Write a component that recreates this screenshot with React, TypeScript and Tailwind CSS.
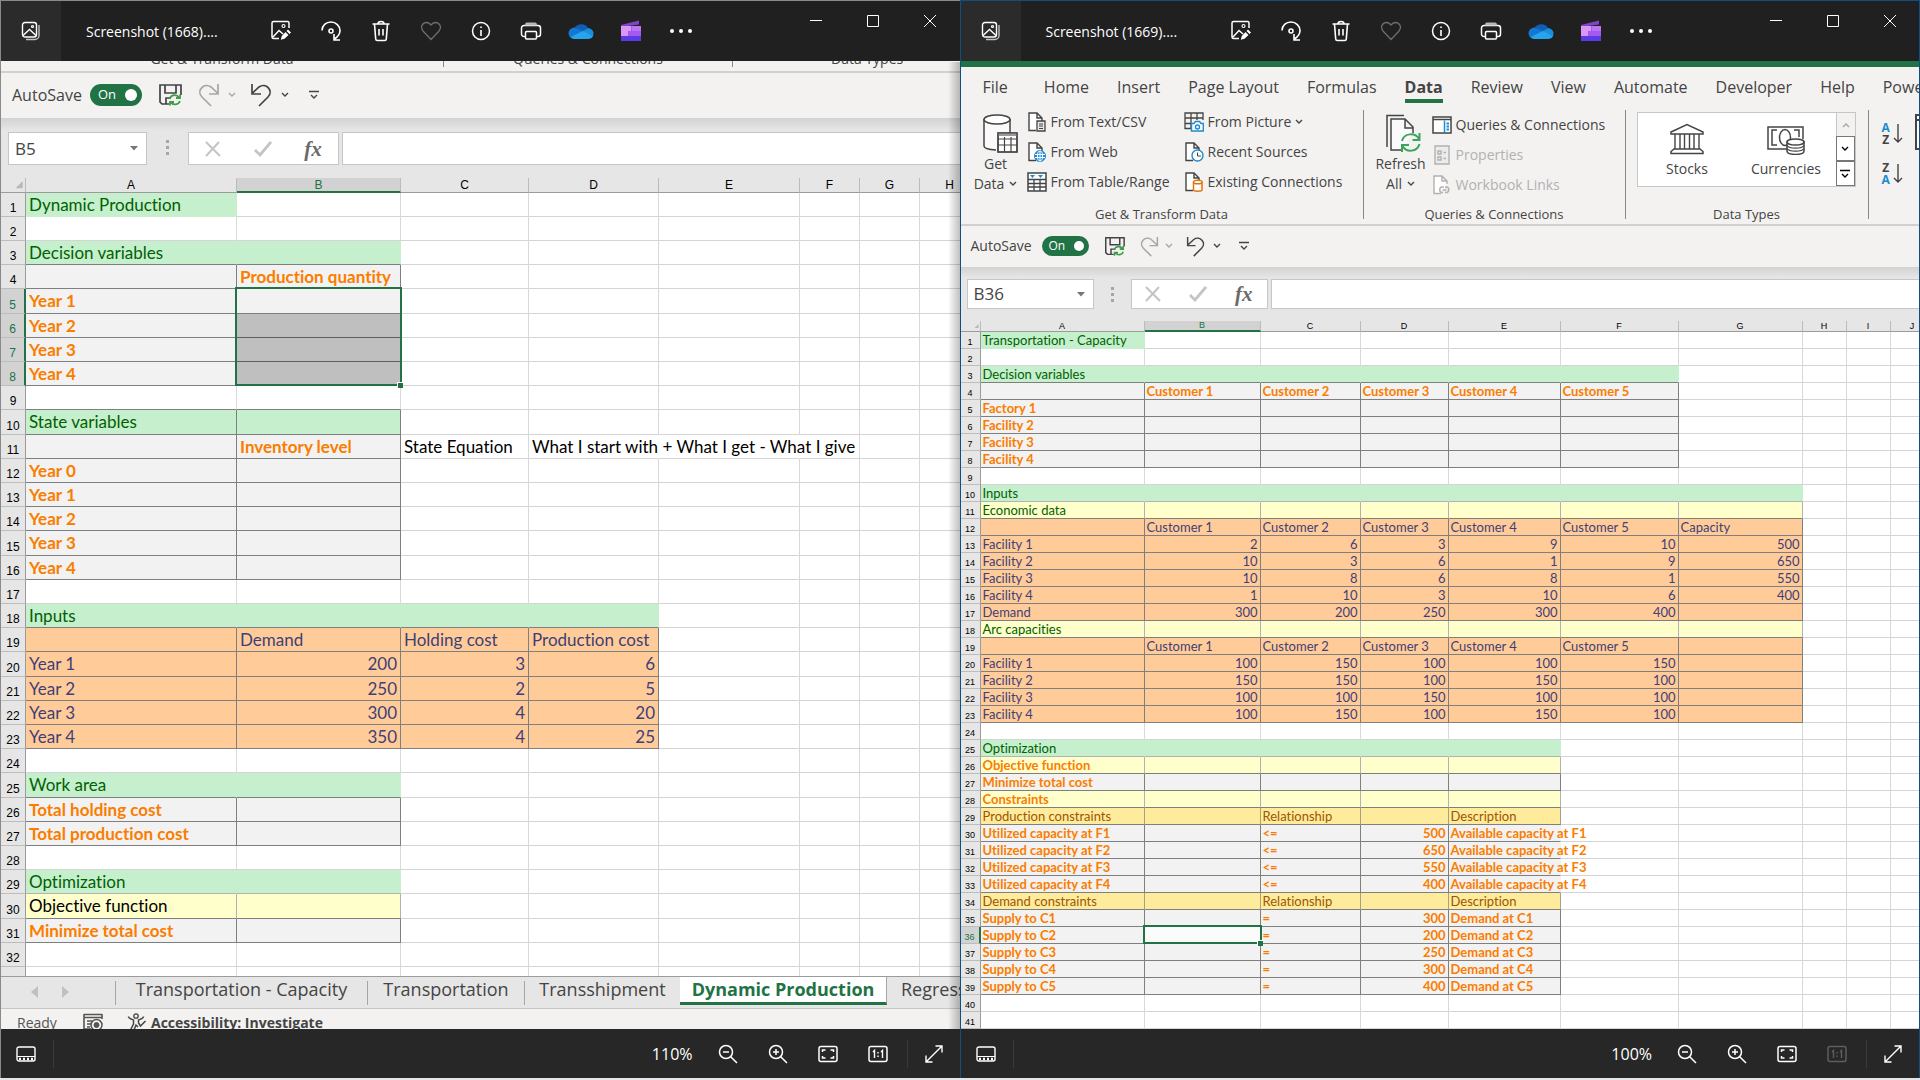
import { ReactNode } from "react";

type Cell = string | number;
type RowData = { s: string; t?: Cell[] };

// one letter per cell, borders are drawn on the right and bottom
const cellStyles: Record<string, string> = {
  ".": "bg-white text-black border-r-[#d9d9d9] border-b-[#d4d4d4]",
  _: "bg-white text-black border-r-white border-b-[#d4d4d4]",
  d: "bg-white border-r-[#d9d9d9] border-b-[#7f7f7f]",
  t: "bg-[#c6efce] text-[#006100] border-r-[#c6efce] border-b-[#c6efce]",
  g: "bg-[#c6efce] text-[#006100] border-r-[#c6efce] border-b-[#7f7f7f]",
  e: "bg-[#c6efce] text-[#006100] border-r-[#c6efce] border-b-[#b2b2b2]",
  G: "bg-[#c6efce] text-[#006100] border-r-[#7f7f7f] border-b-[#7f7f7f]",
  c: "bg-[#f2f2f2] text-[#fa7d00] font-bold border-r-[#7f7f7f] border-b-[#7f7f7f]",
  C: "bg-[#f2f2f2] text-[#fa7d00] font-bold border-r-[#f2f2f2] border-b-[#7f7f7f]",
  s: "bg-[#bfbfbf] border-r-[#7f7f7f] border-b-[#5f5f5f]",
  w: "bg-[#fbfbfb] border-r-[#7f7f7f] border-b-[#7f7f7f]",
  i: "bg-[#ffcc99] text-[#3f3f76] border-r-[#7f7f7f] border-b-[#7f7f7f]",
  y: "bg-[#ffffcc] text-[#006100] border-r-[#b2b2b2] border-b-[#7f7f7f]",
  b: "bg-[#ffffcc] text-black border-r-[#b2b2b2] border-b-[#7f7f7f]",
  o: "bg-[#ffffcc] text-[#fa7d00] font-bold border-r-[#b2b2b2] border-b-[#7f7f7f]",
  n: "bg-[#ffeb9c] text-[#9c5700] border-r-[#a6a08a] border-b-[#7f7f7f]",
};

const leftCols = [211, 164, 128, 130, 141, 60, 60, 60];
const leftRows: RowData[] = [
  { s: "t.......", t: ["Dynamic Production"] },
  { s: "........" },
  { s: "gg......", t: ["Decision variables"] },
  { s: "cc......", t: ["", "Production quantity"] },
  { s: "cc......", t: ["Year 1"] },
  { s: "cs......", t: ["Year 2"] },
  { s: "cs......", t: ["Year 3"] },
  { s: "cs......", t: ["Year 4"] },
  { s: "dd......" },
  { s: "GG......", t: ["State variables"] },
  { s: "cc.__...", t: ["", "Inventory level", "State Equation", "What I start with + What I get - What I give"] },
  { s: "cc......", t: ["Year 0"] },
  { s: "cc......", t: ["Year 1"] },
  { s: "cc......", t: ["Year 2"] },
  { s: "cc......", t: ["Year 3"] },
  { s: "cc......", t: ["Year 4"] },
  { s: "........" },
  { s: "gggg....", t: ["Inputs"] },
  { s: "iiii....", t: ["", "Demand", "Holding cost", "Production cost"] },
  { s: "iiii....", t: ["Year 1", 200, 3, 6] },
  { s: "iiii....", t: ["Year 2", 250, 2, 5] },
  { s: "iiii....", t: ["Year 3", 300, 4, 20] },
  { s: "iiii....", t: ["Year 4", 350, 4, 25] },
  { s: "........" },
  { s: "gg......", t: ["Work area"] },
  { s: "cc......", t: ["Total holding cost"] },
  { s: "cc......", t: ["Total production cost"] },
  { s: "........" },
  { s: "ee......", t: ["Optimization"] },
  { s: "bb......", t: ["Objective function"] },
  { s: "cc......", t: ["Minimize total cost"] },
  { s: "........" },
  { s: "........" },
];

const customers = ["", "Customer 1", "Customer 2", "Customer 3", "Customer 4", "Customer 5"];
const rightCols = [164, 116, 100, 88, 112, 118, 124, 44, 44, 44];
const rightRows: RowData[] = [
  { s: "t.........", t: ["Transportation - Capacity"] },
  { s: ".........." },
  { s: "gggggg....", t: ["Decision variables"] },
  { s: "cccccc....", t: customers },
  { s: "cccccc....", t: ["Factory 1"] },
  { s: "cccccc....", t: ["Facility 2"] },
  { s: "cccccc....", t: ["Facility 3"] },
  { s: "cccccc....", t: ["Facility 4"] },
  { s: ".........." },
  { s: "eeeeeee...", t: ["Inputs"] },
  { s: "yyyyyyy...", t: ["Economic data"] },
  { s: "iiiiiii...", t: [...customers, "Capacity"] },
  { s: "iiiiiii...", t: ["Facility 1", 2, 6, 3, 9, 10, 500] },
  { s: "iiiiiii...", t: ["Facility 2", 10, 3, 6, 1, 9, 650] },
  { s: "iiiiiii...", t: ["Facility 3", 10, 8, 6, 8, 1, 550] },
  { s: "iiiiiii...", t: ["Facility 4", 1, 10, 3, 10, 6, 400] },
  { s: "iiiiiii...", t: ["Demand", 300, 200, 250, 300, 400] },
  { s: "yyyyyyy...", t: ["Arc capacities"] },
  { s: "iiiiiii...", t: customers },
  { s: "iiiiiii...", t: ["Facility 1", 100, 150, 100, 100, 150] },
  { s: "iiiiiii...", t: ["Facility 2", 150, 150, 100, 150, 100] },
  { s: "iiiiiii...", t: ["Facility 3", 100, 100, 150, 100, 100] },
  { s: "iiiiiii...", t: ["Facility 4", 100, 150, 100, 150, 100] },
  { s: ".........." },
  { s: "eeeee.....", t: ["Optimization"] },
  { s: "ooooo.....", t: ["Objective function"] },
  { s: "ccccc.....", t: ["Minimize total cost"] },
  { s: "ooooo.....", t: ["Constraints"] },
  { s: "nnnnn.....", t: ["Production constraints", "", "Relationship", "", "Description"] },
  { s: "ccccC.....", t: ["Utilized capacity at F1", "", "<=", 500, "Available capacity at F1"] },
  { s: "ccccC.....", t: ["Utilized capacity at F2", "", "<=", 650, "Available capacity at F2"] },
  { s: "ccccC.....", t: ["Utilized capacity at F3", "", "<=", 550, "Available capacity at F3"] },
  { s: "ccccC.....", t: ["Utilized capacity at F4", "", "<=", 400, "Available capacity at F4"] },
  { s: "nnnnn.....", t: ["Demand constraints", "", "Relationship", "", "Description"] },
  { s: "ccccc.....", t: ["Supply to C1", "", "=", 300, "Demand at C1"] },
  { s: "cwccc.....", t: ["Supply to C2", "", "=", 200, "Demand at C2"] },
  { s: "ccccc.....", t: ["Supply to C3", "", "=", 250, "Demand at C3"] },
  { s: "ccccc.....", t: ["Supply to C4", "", "=", 300, "Demand at C4"] },
  { s: "ccccc.....", t: ["Supply to C5", "", "=", 400, "Demand at C5"] },
  { s: ".........." },
  { s: ".........." },
];

function Svg({ w, h, box, children }: { w: number; h: number; box?: string; children: ReactNode }) {
  return (
    <svg className="shrink-0" width={w} height={h} viewBox={box || `0 0 ${w} ${h}`} fill="none" stroke="currentColor" aria-hidden="true">
      {children}
    </svg>
  );
}

function Chevron() {
  return (
    <Svg w={8} h={6}><path d="M1 1l3 3 3-3" strokeWidth="1.4" /></Svg>
  );
}

/* ---------- photo viewer frame ---------- */

const toolIcons: { label: string; dim?: boolean; icon: ReactNode }[] = [
  {
    label: "Edit image",
    icon: (
      <Svg w={22} h={22}>
        <path d="M19 8V3a1.500 1.500 0 0 0-1.500-1.500h-14A1.500 1.500 0 0 0 2 3v14a1.500 1.500 0 0 0 1.500 1.500H9M3 17l6-6.500 4 3.500" strokeWidth="1.500" />
        <circle cx="13.500" cy="6" r="1.500" strokeWidth="1.200" />
        <path d="M18 9.500l3 3-1.500 1.500-3-3zM15.500 12l3 3-4 3.800-3.700 1 1-3.800z" fill="currentColor" stroke="none" />
      </Svg>
    ),
  },
  {
    label: "Rotate",
    icon: (
      <Svg w={22} h={22}>
        <path d="M2 10.500C2 5.500 6 2 11 2s9 4 9 8.500c0 3.500-2.500 6.500-5.500 8.500M14 14v6h6" strokeWidth="1.600" />
        <circle cx="11" cy="11" r="2" strokeWidth="1.600" />
      </Svg>
    ),
  },
  {
    label: "Delete",
    icon: (
      <Svg w={20} h={22}>
        <path d="M1.500 4h17M7 4c0-3.300 6-3.300 6 0M3.500 4l1.200 15c.1 1 .7 1.500 1.500 1.500h7.600c.8 0 1.400-.5 1.500-1.500L16.500 4M8 9v6.500M12 9v6.500" strokeWidth="1.600" />
      </Svg>
    ),
  },
  {
    label: "Favourite",
    dim: true,
    icon: (
      <Svg w={22} h={22}>
        <path d="M11 19.500L3 11C-.5 6.500 3 2.500 6.500 2.500 9 2.500 10 4 11 5c1-1 2-2.500 4.500-2.500C19 2.500 22.500 6.500 19 11z" strokeWidth="1.300" />
      </Svg>
    ),
  },
  {
    label: "Info",
    icon: (
      <Svg w={20} h={20}>
        <circle cx="10" cy="10" r="8.500" strokeWidth="1.500" />
        <path d="M10 9v6M10 5.500v1.500" strokeWidth="1.600" />
      </Svg>
    ),
  },
  {
    label: "Print",
    icon: (
      <Svg w={22} h={20}>
        <path d="M5.500 15.500H4A2.500 2.500 0 0 1 1.500 13V7A2.500 2.500 0 0 1 4 4.500h14A2.500 2.500 0 0 1 20.500 7v6a2.500 2.500 0 0 1-2.500 2.500h-1.500" strokeWidth="1.500" />
        <rect x="5.500" y="10.500" width="11" height="7.500" rx="1" strokeWidth="1.500" />
        <path d="M5 4.500c0-2 .5-3 2-3h8c1.500 0 2 1 2 3z" fill="#b8b8b8" stroke="none" />
      </Svg>
    ),
  },
  {
    label: "OneDrive",
    icon: (
      <Svg w={26} h={18}>
        <g stroke="none">
          <path d="M6 7a8 8 0 0 1 14-1l-5 6z" fill="#0f5fb5" />
          <path d="M6.500 5.500C2.500 6 .5 8.500.5 11.500a6 6 0 0 0 2 4L16 9.500z" fill="#1278d0" />
          <path d="M15.500 9l4.500-3c3.500.3 5.500 3 5.500 5.500 0 1-.3 2-.8 3z" fill="#1790dd" />
          <path d="M2.500 15L15.500 8.800l9.500 5.500c-1 2-2.500 2.700-5 2.700H6.500c-1.500 0-3-.6-4-2z" fill="#29a4ec" />
        </g>
      </Svg>
    ),
  },
  {
    label: "Clipchamp",
    icon: (
      <Svg w={22} h={22}>
        <g stroke="none">
          <path d="M1 5l18-4.500v4L1 7z" fill="#8043c9" />
          <path d="M1 6h20v13.500a1.500 1.500 0 0 1-1.500 1.500h-17A1.500 1.500 0 0 1 1 19.500z" fill="#a25af0" />
          <path d="M1 6h10v5H8v5H1z" fill="#dc96f5" />
          <path d="M12 6h9v5h-9z" fill="#b874f3" />
          <path d="M1 16h20v3.500a1.500 1.500 0 0 1-1.500 1.500h-17A1.500 1.500 0 0 1 1 19.500z" fill="#5a3be8" />
        </g>
      </Svg>
    ),
  },
  {
    label: "More",
    icon: (
      <Svg w={24} h={6}>
        <g fill="currentColor" stroke="none">
          <circle cx="3" cy="3" r="2" /><circle cx="12" cy="3" r="2" /><circle cx="21" cy="3" r="2" />
        </g>
      </Svg>
    ),
  },
];

function TitleBar({ title }: { title: string }) {
  return (
    <header className="flex h-[60px] shrink-0 bg-[#202020] text-white">
      <button aria-label="Gallery" className="flex w-[60px] items-center justify-center bg-[#2b2b2b]">
        <Svg w={20} h={20}>
          <rect x="1.500" y="1.500" width="14" height="14.500" rx="2.500" strokeWidth="1.400" />
          <path d="M2 14.500l6.500-6 6.500 6" strokeWidth="1.400" />
          <circle cx="11.500" cy="5.500" r="1" strokeWidth="1.200" />
          <path d="M18 4v10.500a4 4 0 0 1-4 4H5" strokeWidth="1.400" stroke="#c0c0c0" />
        </Svg>
      </button>
      <h1 className="w-[195px] truncate pl-[25px] text-sm leading-[62px]">{title}</h1>
      {toolIcons.map((item) => (
        <button key={item.label} aria-label={item.label} className={"flex w-[50px] items-center justify-center " + (item.dim ? "text-[#6d6d6d]" : "text-white")}>
          {item.icon}
        </button>
      ))}
      <div className="ml-auto flex h-10 pr-px">
        <button aria-label="Minimize" className="flex w-[57px] items-center justify-center">
          <Svg w={12} h={12}><path d="M0 5.500h12" /></Svg>
        </button>
        <button aria-label="Maximize" className="flex w-[57px] items-center justify-center">
          <Svg w={12} h={12}><path d="M.5.5h11v11H.5z" /></Svg>
        </button>
        <button aria-label="Close" className="flex w-[57px] items-center justify-center">
          <Svg w={12} h={12}><path d="M0 0l12 12M12 0L0 12" /></Svg>
        </button>
      </div>
    </header>
  );
}

function BottomBar({ zoom, actualOff }: { zoom: string; actualOff?: boolean }) {
  return (
    <footer className="flex h-[49px] shrink-0 items-center bg-[#272727] text-white">
      <button aria-label="Filmstrip" className="flex w-[50px] justify-center">
        <Svg w={20} h={16}>
          <rect x="1" y="1" width="18" height="14" rx="2" strokeWidth="1.400" />
          <path d="M1 10.500h18" />
          <path d="M3 13h14" strokeWidth="2.500" strokeDasharray="2 2" />
        </Svg>
      </button>
      <div className="ml-[2px] h-7 w-px bg-[#3a3a3a]"></div>
      <span className="ml-auto pr-[10px] text-base">{zoom}</span>
      <button aria-label="Zoom out" className="flex w-[50px] justify-center">
        <Svg w={20} h={20}><circle cx="8" cy="8" r="6.500" strokeWidth="1.500" /><path d="M12.500 12.500L19 19M5 8h6" strokeWidth="1.500" /></Svg>
      </button>
      <button aria-label="Zoom in" className="flex w-[50px] justify-center">
        <Svg w={20} h={20}><circle cx="8" cy="8" r="6.500" strokeWidth="1.500" /><path d="M12.500 12.500L19 19M5 8h6M8 5v6" strokeWidth="1.500" /></Svg>
      </button>
      <button aria-label="Zoom to fit" className="flex w-[50px] justify-center">
        <Svg w={20} h={18}>
          <rect x="1" y="1.500" width="18" height="15" rx="2" strokeWidth="1.500" />
          <path d="M4.500 7V5h3M12.500 5h3v2M15.500 11v2h-3M7.500 13h-3v-2" strokeWidth="1.500" />
        </Svg>
      </button>
      <button aria-label="Actual size" disabled={actualOff} className={"flex w-[50px] justify-center " + (actualOff ? "text-[#5e5e5e]" : "")}>
        <Svg w={20} h={18}>
          <rect x="1" y="1.500" width="18" height="15" rx="2" strokeWidth="1.500" />
          <path d="M5 7l1.500-1.500V13M13 7l1.500-1.500V13M10 7v1.500M10 10.500V12" strokeWidth="1.400" />
        </Svg>
      </button>
      <div className="ml-1 h-7 w-px bg-[#3a3a3a]"></div>
      <button aria-label="Full screen" className="flex w-[52px] justify-center">
        <Svg w={18} h={18}><path d="M1 17L17 1M10.500 1H17v6.500M1 10.500V17h6.500" strokeWidth="1.400" /></Svg>
      </button>
    </footer>
  );
}

/* ---------- spreadsheet parts ---------- */

function QuickAccess({ large }: { large?: boolean }) {
  const s = large ? 24 : 21;
  return (
    <div className={"flex shrink-0 items-center bg-[#f3f2f1] pb-px text-[#444] " + (large ? "h-[45px] pl-[11px]" : "h-[41px] pl-[10px]")}>
      <span className={large ? "w-[78px] text-base" : "w-[71px] text-sm"}>AutoSave</span>
      <button
        role="switch"
        aria-checked="true"
        aria-label="AutoSave"
        className={"flex items-center justify-between rounded-full bg-[#217346] text-white " + (large ? "h-[22px] w-[52px] pr-[5px] pl-2 text-[13px]" : "h-5 w-[47px] pr-[5px] pl-[7px] text-xs")}
      >
        On
        <span className={"rounded-full bg-white " + (large ? "size-3" : "size-[10px]")}></span>
      </button>
      <button aria-label="Save" className={large ? "ml-4" : "ml-[15px]"}>
        <Svg w={s} h={s} box="0 0 24 24">
          <path d="M11 21H4l-2-2V2h21v10M7 2v8h11V2M8 21v-6h5" strokeWidth="1.700" />
          <path d="M12 15c1.500-3.500 7-4 9-.5M22 11.500v3.500h-4M22 18c-1.500 4-7 4.500-9.500 1M12 22.500V19h4" strokeWidth="1.800" stroke="#3c9e4a" />
        </Svg>
      </button>
      <button aria-label="Redo" className={"text-[#a6a6a6] " + (large ? "ml-[15px]" : "ml-[14px]")}>
        <Svg w={s} h={s} box="0 0 24 24"><path d="M14 23l-9-9C-1 8 7-1 14 4l6.500 6M21 1v10H12" strokeWidth="1.700" /></Svg>
      </button>
      <button aria-label="Redo list" className={"text-[#a6a6a6] " + (large ? "ml-[7px]" : "ml-[5px]")}><Chevron /></button>
      <button aria-label="Undo" className={large ? "ml-[13px]" : "ml-3"}>
        <Svg w={s} h={s} box="0 0 24 24"><path d="M10 23l9-9c6-6-2-15-9-10L3.500 10M3 1v10h9" strokeWidth="1.700" /></Svg>
      </button>
      <button aria-label="Undo list" className={large ? "ml-2" : "ml-[7px]"}><Chevron /></button>
      <button aria-label="Customize toolbar" className={large ? "ml-5" : "ml-[18px]"}>
        <Svg w={10} h={10}><path d="M0 1.500h10M2 5l3 3 3-3" strokeWidth="1.400" /></Svg>
      </button>
    </div>
  );
}

function FormulaBar({ cell, large }: { cell: string; large?: boolean }) {
  return (
    <div className={"flex shrink-0 items-start bg-gradient-to-b from-[#d2d2d2] via-[#e6e6e6] via-20% to-[#e6e6e6] " + (large ? "h-[60px] pt-[14px] pl-[7px]" : "h-[54px] pt-3 pl-[6px]")}>
      <label className={"flex items-center border border-[#c6c6c6] bg-white pr-2 " + (large ? "h-[33px] w-[139px]" : "h-[30px] w-[127px]")}>
        <input aria-label="Name box" defaultValue={cell} className="w-full min-w-0 bg-transparent pl-[6px] text-[17px] text-[#444] outline-none" />
        <Svg w={8} h={5}><path d="M0 0h8L4 4.500z" fill="#777" stroke="none" /></Svg>
      </label>
      <div className={"flex w-[3px] flex-col gap-[3px] " + (large ? "mx-[19px] mt-2" : "mx-[17px] mt-2")}>
        <i className="size-[3px] bg-[#a6a6a6]"></i>
        <i className="size-[3px] bg-[#a6a6a6]"></i>
        <i className="size-[3px] bg-[#a6a6a6]"></i>
      </div>
      <div className={"flex items-center justify-around border border-[#c6c6c6] bg-white " + (large ? "h-[33px] w-[151px]" : "h-[30px] w-[137px]")}>
        <button aria-label="Cancel" className="text-[#c4c4c4]">
          <Svg w={16} h={16}><path d="M1 1l14 14M14 1L1 15" strokeWidth="2" /></Svg>
        </button>
        <button aria-label="Enter" className="text-[#c4c4c4]">
          <Svg w={18} h={16}><path d="M1 9l5 5L17 1" strokeWidth="2.800" /></Svg>
        </button>
        <button aria-label="Insert function" className="font-[Liberation_Serif,serif] text-[21px] leading-6 font-bold text-[#6a6a6a] italic">fx</button>
      </div>
      <input aria-label="Formula" className={"ml-[3px] min-w-0 flex-1 border border-r-0 border-[#c6c6c6] bg-white outline-none " + (large ? "h-[33px]" : "h-[30px]")} />
    </div>
  );
}

type SheetProps = {
  cols: number[];
  rows: RowData[];
  large?: boolean;
  first: number;
  last: number;
};

// selection is always in column B, from row `first` to row `last`
function Sheet({ cols, rows, large, first, last }: SheetProps) {
  const total = cols.reduce((a, b) => a + b, large ? 25 : 20);
  return (
    <div className="min-h-0 flex-1 overflow-hidden bg-white">
      <table
        className={"table-fixed border-separate border-spacing-0 font-[Lato,Carlito,sans-serif] [font-variant-ligatures:none] " + (large ? "text-[17px] leading-5" : "text-[13px] leading-[15px]")}
        style={{ width: total }}
      >
        <colgroup>
          <col className={large ? "w-[25px]" : "w-5"} />
          {cols.map((w, i) => <col key={i} style={{ width: w }} />)}
        </colgroup>
        <thead>
          <tr className={"bg-[#e6e6e6] font-[Liberation_Sans,sans-serif] text-black " + (large ? "h-[15px] text-xs leading-3" : "h-[11px] text-[9px] leading-[9px]")}>
            <th className="border-r border-b border-[#9b9b9b] border-r-[#bbb] p-0">
              <svg className="ml-auto" width={large ? 10 : 6} height={large ? 9 : 5} viewBox="0 0 10 10" aria-hidden="true"><path d="M8 0v8H0z" fill="#b8b8b8" /></svg>
            </th>
            {cols.map((w, i) => (
              <th
                key={i}
                scope="col"
                className={"border-r border-r-[#bbb] p-0 font-normal " + (i === 1 ? "border-b-2 border-b-[#217346] bg-[#d2d2d2] text-[#217346]" : "border-b border-b-[#9b9b9b]")}
              >
                {"ABCDEFGHIJ"[i]}
              </th>
            ))}
          </tr>
        </thead>
        <tbody>
          {rows.map((row, r) => {
            const n = r + 1;
            const picked = n >= first && n <= last;
            const height = large ? (n % 5 === 0 ? "h-[25px]" : "h-6") : "h-[17px]";
            return (
              <tr key={n} className={height}>
                <th
                  scope="row"
                  className={
                    "border-b border-b-[#bdbdbd] p-0 align-bottom font-[Liberation_Sans,sans-serif] font-normal " +
                    (large ? "text-xs leading-4 " : "text-[9px] leading-3 ") +
                    (picked ? "border-r-2 border-r-[#217346] bg-[#d2d2d2] text-[#217346]" : "border-r border-r-[#9b9b9b] bg-[#e6e6e6] text-black")
                  }
                >
                  {large && n === 33 ? "" : n}
                </th>
                {row.s.split("").map((code, c) => {
                  const value = row.t?.[c];
                  const anchor = n === first && c === 1;
                  return (
                    <td
                      key={c}
                      className={
                        "border-r border-b py-0 whitespace-nowrap " +
                        (anchor ? "relative " : "") +
                        (large ? "px-[3px] " : "px-[2px] pt-px ") +
                        (typeof value === "number" ? "text-right " : "text-left ") +
                        cellStyles[code]
                      }
                    >
                      {value}
                      {anchor && (
                        <span className={"absolute -top-[2px] -right-[2px] -left-[2px] z-10 border-2 border-[#217346] " + (large ? "h-[99px]" : "h-[19px]")}>
                          <i className="absolute -right-[3px] -bottom-[4px] size-[6px] border-t border-l border-white bg-[#217346]"></i>
                        </span>
                      )}
                    </td>
                  );
                })}
              </tr>
            );
          })}
        </tbody>
      </table>
    </div>
  );
}

/* ---------- ribbon ---------- */

const tabs = ["File", "Home", "Insert", "Page Layout", "Formulas", "Data", "Review", "View", "Automate", "Developer", "Help", "Power Pivot"];

function PageIcon({ children }: { children?: ReactNode }) {
  return (
    <Svg w={20} h={20}>
      <path d="M9 18.500H2V1h8l5 5v3M10 1v5h5" strokeWidth="1.400" fill="#fff" />
      {children}
    </Svg>
  );
}

const textIcon = <PageIcon><path d="M10 9h8v10h-8z" fill="#e8e8e8" strokeWidth="1.300" /><path d="M12 12h4M12 14h4M12 16.500h4" /></PageIcon>;
const webIcon = (
  <PageIcon>
    <circle cx="13" cy="14" r="5.500" fill="#1e8bd0" stroke="#1e8bd0" />
    <path d="M8 12.500h10M8 15.500h10M13 9v10" stroke="#fff" />
    <ellipse cx="13" cy="14" rx="2.500" ry="5" stroke="#fff" />
  </PageIcon>
);
const tableIcon = (
  <Svg w={20} h={20}>
    <path d="M1 1h18v18H1z" fill="#fff" strokeWidth="1.500" />
    <path d="M1 7.500h18M1 11.500h18M1 15h18M7 7.500V19M13 7.500V19" strokeWidth="1.300" />
    <path d="M3 3h5l-2.500 3zM11 3h5l-2.500 3z" fill="#1e8bd0" stroke="none" />
  </Svg>
);
const pictureIcon = (
  <Svg w={20} h={20}>
    <path d="M7 16.500H1V1h18v7M1 6h18M1 11.500h6M7 1v15.500M13 1v7" strokeWidth="1.300" />
    <path d="M7.500 11.500H10l1.500-2h4l1.500 2h2.300V19H7.500z" fill="#fff" stroke="#1e8bd0" strokeWidth="1.400" />
    <circle cx="13.500" cy="15" r="2" stroke="#1e8bd0" strokeWidth="1.400" />
  </Svg>
);
const recentIcon = <PageIcon><circle cx="13.500" cy="13.500" r="5.500" fill="#fff" stroke="#1e8bd0" strokeWidth="1.400" /><path d="M13.500 10.500v3.500H17" /></PageIcon>;
const connIcon = (
  <PageIcon>
    <path d="M9.500 10v8c0 1.500 8.500 1.500 8.500 0v-8" fill="#fff" stroke="#e2730c" strokeWidth="1.500" />
    <ellipse cx="13.800" cy="10" rx="4.300" ry="1.800" fill="#fff" stroke="#e2730c" strokeWidth="1.500" />
  </PageIcon>
);
const queriesIcon = (
  <Svg w={20} h={20}>
    <path d="M1 2h18v16H1z" fill="#fff" strokeWidth="1.500" />
    <path d="M1 4.500h18" strokeWidth="1.500" />
    <path d="M12.500 5.500v12" stroke="#1e8bd0" strokeWidth="1.500" />
    <path d="M14.500 8.500H17M14.500 11.500H17M14.500 14.500H17" stroke="#1e8bd0" strokeWidth="1.800" />
  </Svg>
);
const propsIcon = (
  <Svg w={20} h={20}>
    <path d="M3 1h14v18H3z" fill="#ececec" strokeWidth="1.400" />
    <path d="M6 6h3v3H6zM6 12h3v3H6zM11.500 7.500H14M11.500 13.500H14" strokeWidth="1.400" />
  </Svg>
);
const linksIcon = (
  <PageIcon>
    <path d="M11 17.500H9.500a3 3 0 0 1 0-5.500h2.500M13 12h2a3 3 0 0 1 0 5.500h-2M10.500 15h4" strokeWidth="1.600" />
  </PageIcon>
);

function SmallCommand({ icon, text, menu, off }: { icon: ReactNode; text: string; menu?: boolean; off?: boolean }) {
  return (
    <button disabled={off} className={"flex items-center gap-1 text-left whitespace-nowrap " + (off ? "text-[#b1b1b1]" : "text-[#444]")}>
      {icon}
      {text}
      {menu && <Chevron />}
    </button>
  );
}

function Group({ label, width, children }: { label: string; width: string; children: ReactNode }) {
  return (
    <section className={"flex h-[109px] shrink-0 flex-col border-r border-[#8a8886] " + width}>
      <div className="flex h-24 shrink-0">{children}</div>
      <h2 className="shrink-0 text-center text-[13px] leading-4">{label}</h2>
    </section>
  );
}

function Ribbon() {
  return (
    <div className="shrink-0 overflow-hidden border-b-2 border-[#d2d0ce] bg-[#f3f2f1] text-sm text-[#444]">
      <nav className="flex h-[43px] items-start pt-1 pl-2 text-base">
        {tabs.map((tab) => (
          <button
            key={tab}
            className={"relative shrink-0 px-[14px] leading-8 " + (tab === "File" ? "mr-2 " : "") + (tab === "Data" ? "font-bold" : "")}
          >
            {tab}
            {tab === "Data" && <span className="absolute inset-x-[14px] bottom-0 h-1 bg-[#217346]"></span>}
          </button>
        ))}
      </nav>
      <div className="flex h-[114px]">
        <Group label="Get & Transform Data" width="w-[403px]">
          <button className="ml-3 flex w-[46px] flex-col items-center self-start pt-1 leading-5">
            <span className="pl-2">
              <Svg w={36} h={40}>
                <path d="M2 6h26v13H15v17C6 36 2 34 2 31z" fill="#fafafa" stroke="none" />
                <path d="M2 5v27c0 2 4 3.500 12 4M28 5v14" strokeWidth="1.500" />
                <ellipse cx="15" cy="5.500" rx="13" ry="4.500" fill="#fff" strokeWidth="1.500" />
                <path d="M16 19h19v19H16z" fill="#fff" strokeWidth="1.500" />
                <path d="M16 20.500h19" strokeWidth="3" stroke="#999" />
                <path d="M16 25h19M16 31h19M22.500 23v15M29 23v15M16 19h19v19H16z" strokeWidth="1.200" />
              </Svg>
            </span>
            Get
            <span className="flex items-center gap-[5px]">Data <Chevron /></span>
          </button>
          <div className="ml-2 flex w-[157px] flex-col justify-between pt-[2px] pb-[14px]">
            <SmallCommand icon={textIcon} text="From Text/CSV" />
            <SmallCommand icon={webIcon} text="From Web" />
            <SmallCommand icon={tableIcon} text="From Table/Range" />
          </div>
          <div className="flex flex-col justify-between pt-[2px] pb-[14px]">
            <SmallCommand icon={pictureIcon} text="From Picture" menu />
            <SmallCommand icon={recentIcon} text="Recent Sources" />
            <SmallCommand icon={connIcon} text="Existing Connections" />
          </div>
        </Group>
        <Group label="Queries & Connections" width="w-[262px]">
          <button className="ml-3 flex w-[50px] flex-col items-center self-start pt-1 leading-5">
            <span className="pl-1">
              <Svg w={36} h={40}>
                <path d="M2 33V1.500h17" strokeWidth="1.500" />
                <path d="M16 36H6V5h14l8 8v6M20 5v9h8" strokeWidth="1.500" fill="#fafafa" />
                <path d="M17 27c2-8 13-9 17-2M34.500 19v7h-7M34.500 30c-2 8-13 9-17 2M17 38v-7h7" strokeWidth="2" stroke="#3ca55c" />
              </Svg>
            </span>
            Refresh
            <span className="flex items-center gap-[5px]">All <Chevron /></span>
          </button>
          <div className="ml-[6px] flex flex-col justify-between pt-[5px] pb-[11px]">
            <SmallCommand icon={queriesIcon} text="Queries & Connections" />
            <SmallCommand icon={propsIcon} text="Properties" off />
            <SmallCommand icon={linksIcon} text="Workbook Links" off />
          </div>
        </Group>
        <Group label="Data Types" width="w-[243px]">
          <div className="mt-[2px] ml-[11px] flex h-[75px] w-[219px] border border-[#c8c6c4] bg-white">
            <button className="flex flex-1 flex-col items-center pt-[10px] leading-5">
              <Svg w={36} h={32}>
                <path d="M2 9L18 1.500 34 9v2H2zM5 26h26M2 30.500v-2l3-2.500h26l3 2.500v2z" strokeWidth="1.500" />
                <path d="M6 11v15M11 11v15M15.500 11v15M20.500 11v15M25 11v15M30 11v15" strokeWidth="1.400" />
              </Svg>
              <span className="pt-1">Stocks</span>
            </button>
            <button className="flex flex-1 flex-col items-center pt-[10px] leading-5">
              <Svg w={38} h={32}>
                <path d="M20 26H1V4h35v12" strokeWidth="1.500" />
                <path d="M10 7H5v15h5M27 7h5v7" strokeWidth="1.500" />
                <ellipse cx="18" cy="14.500" rx="5.500" ry="8" strokeWidth="1.500" />
                <path d="M20 19v9c0 4.500 17 4.500 17 0v-9z" fill="#fff" strokeWidth="1.500" />
                <path d="M20 22.500c2 3.500 15 3.500 17 0M20 25.500c2 3.500 15 3.500 17 0" strokeWidth="1.300" />
                <ellipse cx="28.500" cy="19" rx="8.500" ry="3" fill="#fff" strokeWidth="1.500" />
              </Svg>
              <span className="pt-1">Currencies</span>
            </button>
            <div className="flex w-[19px] flex-col">
              <button aria-label="Row up" className="flex flex-1 items-center justify-center border-l border-[#c8c6c4] bg-[#f3f2f1] text-[#a6a6a6]">
                <Svg w={8} h={6}><path d="M1 5l3-3 3 3" strokeWidth="1.300" /></Svg>
              </button>
              <button aria-label="Row down" className="flex flex-1 items-center justify-center border border-[#777] text-black"><Chevron /></button>
              <button aria-label="More data types" className="flex flex-1 items-center justify-center border border-[#777] text-black">
                <Svg w={10} h={10}><path d="M0 1.500h10M2 5l3 3 3-3" strokeWidth="1.400" /></Svg>
              </button>
            </div>
          </div>
        </Group>
        <div className="flex w-[46px] shrink-0 flex-col items-start gap-4 pt-3 pl-[13px]">
          <button aria-label="Sort A to Z" className="flex items-center gap-[2px] text-xs leading-[12px] font-bold">
            <span className="flex flex-col"><span className="text-[#1e8bd0]">A</span><span>Z</span></span>
            <Svg w={12} h={22}><path d="M6 1v18M2 15l4 4 4-4" strokeWidth="1.400" /></Svg>
          </button>
          <button aria-label="Sort Z to A" className="flex items-center gap-[2px] text-xs leading-[12px] font-bold">
            <span className="flex flex-col"><span>Z</span><span className="text-[#1e8bd0]">A</span></span>
            <Svg w={12} h={22}><path d="M6 1v18M2 15l4 4 4-4" strokeWidth="1.400" /></Svg>
          </button>
        </div>
        <button aria-label="Sort" className="mt-1 shrink-0 self-start">
          <Svg w={36} h={36}><path d="M1 1h34v34H1zM1 6h34" fill="#fff" strokeWidth="2" /></Svg>
        </button>
      </div>
    </div>
  );
}

/* ---------- two windows ---------- */

function LeftWindow() {
  return (
    <section className="relative flex min-w-0 flex-1 flex-col border-t border-l border-[#8a8a8a]">
      <TitleBar title="Screenshot (1668)...." />
      <div className="flex h-3 shrink-0 items-end overflow-hidden border-b-2 border-[#d2d0ce] bg-[#f3f2f1] pb-1 text-sm leading-[16px] text-[#444]">
        <span className="w-[443px] border-r border-[#8a8886] text-center">Get &amp; Transform Data</span>
        <span className="w-[289px] border-r border-[#8a8886] text-center">Queries &amp; Connections</span>
        <span className="flex-1 pl-[98px]">Data Types</span>
      </div>
      <QuickAccess large />
      <FormulaBar cell="B5" large />
      <Sheet cols={leftCols} rows={leftRows} large first={5} last={8} />
      <nav className="flex h-[33px] shrink-0 items-start overflow-hidden border-t border-b border-t-[#9b9b9b] border-b-[#c6c6c6] bg-[#e6e6e6] text-lg leading-4 whitespace-nowrap text-[#444]">
        <div className="flex w-[114px] shrink-0 gap-6 pt-[9px] pl-[30px] text-[#c0c0c0]">
          <button aria-label="Previous sheet"><Svg w={7} h={12}><path d="M7 0v12L0 6z" fill="currentColor" stroke="none" /></Svg></button>
          <button aria-label="Next sheet"><Svg w={7} h={12}><path d="M0 0v12l7-6z" fill="currentColor" stroke="none" /></Svg></button>
        </div>
        <button className="mt-1 h-6 w-[252px] shrink-0 border-l border-[#a6a6a6] pb-2">Transportation - Capacity</button>
        <button className="mt-1 h-6 w-[157px] shrink-0 border-l border-[#a6a6a6] pb-2">Transportation</button>
        <button className="mt-1 h-6 w-[156px] shrink-0 border-l border-[#a6a6a6] pb-2">Transshipment</button>
        <button className="h-[28px] w-[207px] shrink-0 border-r border-b-[3px] border-[#217346] border-r-[#a6a6a6] bg-white pb-px font-bold text-[#217346]">Dynamic Production</button>
        <button className="mt-1 h-6 pb-2 pl-[14px]">Regression</button>
      </nav>
      <div className="flex h-5 shrink-0 items-start overflow-hidden bg-[#f3f2f1] pt-1 text-sm leading-5 text-[#555]">
        <span className="w-[66px] pl-4">Ready</span>
        <span className="w-[44px] pl-4">
          <Svg w={20} h={20}>
            <path d="M1 1.500h18M1 4.500h18M1 1v15h7M19 1v5M4 8h5M4 11h4M4 14h3" strokeWidth="1.600" />
            <circle cx="13.500" cy="12" r="5.500" strokeWidth="1.500" />
            <circle cx="13.500" cy="12" r="2.500" fill="currentColor" />
          </Svg>
        </span>
        <button className="flex gap-1 pl-4 font-bold text-[#444]">
          <Svg w={20} h={20}>
            <circle cx="9" cy="3" r="2.200" strokeWidth="1.300" />
            <path d="M1.500 3.500c0 2 4 3 5 3.500v4l-3 6M16.500 3.500c0 2-4 3-5 3.500v3l2 3 5-5M7 17l2-5 2 2" strokeWidth="1.500" />
          </Svg>
          Accessibility: Investigate
        </button>
      </div>
      <BottomBar zoom="110%" />
      <div className="pointer-events-none absolute top-[61px] right-0 bottom-[49px] w-3 bg-gradient-to-l from-black/25 to-transparent"></div>
    </section>
  );
}

function RightWindow() {
  return (
    <section className="flex min-w-0 flex-1 flex-col border border-b-0 border-[#0f4f87]">
      <TitleBar title="Screenshot (1669)...." />
      <div className="h-[6px] shrink-0 bg-[#217346]"></div>
      <Ribbon />
      <QuickAccess />
      <FormulaBar cell="B36" />
      <Sheet cols={rightCols} rows={rightRows} first={36} last={36} />
      <BottomBar zoom="100%" actualOff />
    </section>
  );
}

export default function App() {
  return (
    <main className="flex h-screen overflow-hidden bg-[#e3e6e8] pb-[2px] font-[Open_Sans,Noto_Sans,sans-serif]">
      <LeftWindow />
      <RightWindow />
    </main>
  );
}
